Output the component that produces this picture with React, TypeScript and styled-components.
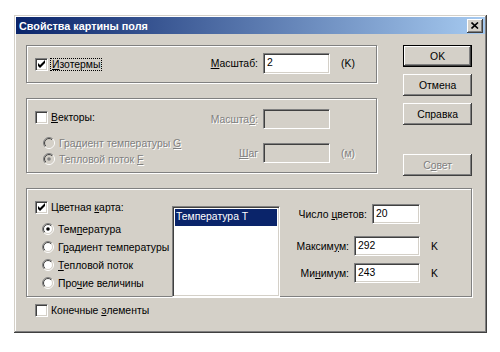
import { type FC, type ReactNode } from "react";
import styled, { createGlobalStyle } from "styled-components";

const GlobalStyle = createGlobalStyle`
  html, body {
    margin: 0;
    padding: 0;
    background: #fff;
  }
  body {
    font-family: "Liberation Sans", Arial, sans-serif;
    font-size: 10.4px;
    color: #000;
    white-space: nowrap;
  }
`;

const Window = styled.div`
  box-sizing: border-box;
  width: 473px;
  height: 318px;
  margin: 15px 0 0 14px;
  padding: 2px;
  background: #d4d0c8;
  box-shadow: inset -1px -1px #404040, inset 1px 1px #d4d0c8,
    inset -2px -2px #808080, inset 2px 2px #fff;
  display: flex;
  flex-direction: column;
`;

const TitleBar = styled.div`
  height: 17px;
  display: flex;
  align-items: center;
  justify-content: space-between;
  padding: 0 2px 0 3px;
  background: linear-gradient(to right, #0a246a, #a6caf0);
  color: #fff;
  font-weight: bold;
  font-size: 10.8px;
`;

const CloseBtn = styled.div`
  box-sizing: border-box;
  width: 16px;
  height: 14px;
  background: #d4d0c8;
  box-shadow: inset -1px -1px #404040, inset 1px 1px #fff,
    inset -2px -2px #808080, inset 2px 2px #d4d0c8;
  display: flex;
  align-items: center;
  justify-content: center;
`;

const Content = styled.div`
  padding: 11px 13px 0 10px;
  display: flex;
  flex-direction: column;
`;

const TopRow = styled.div`
  height: 128px;
  display: flex;
  align-items: flex-start;
  gap: 26px;
`;

const GroupsCol = styled.div`
  width: 352px;
  display: flex;
  flex-direction: column;
  gap: 15px;
`;

const Group = styled.div<{ $h: number; $w?: number }>`
  box-sizing: border-box;
  height: ${(p) => p.$h}px;
  width: ${(p) => (p.$w ? `${p.$w}px` : "auto")};
  border: 1px solid #808080;
  box-shadow: inset 1px 1px 0 #fff, 1px 1px 0 #fff;
  padding-left: 8px;
  display: flex;
`;

const LeftPart = styled.div<{ $w: number; $top?: number }>`
  width: ${(p) => p.$w}px;
  flex: none;
  padding-top: ${(p) => p.$top ?? 0}px;
  display: flex;
  flex-direction: column;
`;

const ButtonsCol = styled.div`
  width: 69px;
  display: flex;
  flex-direction: column;
  gap: 7px;
`;

const Button = styled.div<{ $default?: boolean; $disabled?: boolean; $gapTop?: number }>`
  box-sizing: border-box;
  height: 22px;
  margin-top: ${(p) => p.$gapTop ?? 0}px;
  display: flex;
  align-items: center;
  justify-content: center;
  background: #d4d0c8;
  color: ${(p) => (p.$disabled ? "#808080" : "#000")};
  text-shadow: ${(p) => (p.$disabled ? "1px 1px 0 #fff" : "none")};
  border: ${(p) => (p.$default ? "1px solid #000" : "none")};
  box-shadow: inset -1px -1px #404040, inset 1px 1px #fff,
    inset -2px -2px #808080, inset 2px 2px #d4d0c8;
`;

const CheckRow = styled.div<{ $disabled?: boolean }>`
  display: flex;
  align-items: center;
  height: 15px;
  gap: 3px;
  color: ${(p) => (p.$disabled ? "#808080" : "#000")};
`;

const Box = styled.span`
  box-sizing: border-box;
  width: 13px;
  height: 13px;
  flex: none;
  background: #fff;
  border: 1px solid;
  border-color: #808080 #fff #fff #808080;
  box-shadow: inset 1px 1px #404040, inset -1px -1px #d4d0c8;
  display: flex;
  align-items: center;
  justify-content: center;
`;

const Focus = styled.span`
  outline: 1px dotted #000;
  outline-offset: 0;
  padding: 0 1px;
  line-height: 13px;
`;

const Key = styled.span`
  text-decoration: underline;
`;

const Dim = styled.span<{ $on?: boolean }>`
  color: ${(p) => (p.$on ? "#808080" : "inherit")};
  text-shadow: ${(p) => (p.$on ? "1px 1px 0 #fff" : "none")};
`;

const RadioList = styled.div<{ $left: number; $row: number; $top: number }>`
  display: flex;
  flex-direction: column;
  padding-left: ${(p) => p.$left}px;
  margin-top: ${(p) => p.$top}px;
  & > div {
    height: ${(p) => p.$row}px;
  }
`;

const RadioRow = styled.div`
  display: flex;
  align-items: center;
  gap: 4px;
`;

const FieldCol = styled.div<{ $top: number; $gap: number }>`
  padding-top: ${(p) => p.$top}px;
  display: flex;
  flex-direction: column;
  gap: ${(p) => p.$gap}px;
`;

const FieldRow = styled.div<{ $end?: boolean }>`
  display: flex;
  align-items: center;
  justify-content: ${(p) => (p.$end ? "flex-end" : "flex-start")};
`;

const FieldLabel = styled.span<{ $w?: number; $disabled?: boolean }>`
  width: ${(p) => (p.$w ? `${p.$w}px` : "auto")};
  text-align: right;
  margin-right: 5px;
  color: ${(p) => (p.$disabled ? "#808080" : "#000")};
  text-shadow: ${(p) => (p.$disabled ? "1px 1px 0 #fff" : "none")};
`;

const Input = styled.div<{ $w: number; $h?: number; $disabled?: boolean }>`
  box-sizing: border-box;
  width: ${(p) => p.$w}px;
  height: ${(p) => p.$h ?? 20}px;
  background: ${(p) => (p.$disabled ? "#d4d0c8" : "#fff")};
  border: 1px solid;
  border-color: #808080 #fff #fff #808080;
  box-shadow: inset 1px 1px #404040, inset -1px -1px #d4d0c8;
  padding: 2px 3px 0;
  line-height: 14px;
`;

const Unit = styled.span<{ $w?: number; $disabled?: boolean }>`
  width: ${(p) => (p.$w ? `${p.$w}px` : "auto")};
  margin-left: 11px;
  color: ${(p) => (p.$disabled ? "#808080" : "#000")};
  text-shadow: ${(p) => (p.$disabled ? "1px 1px 0 #fff" : "none")};
`;

const ListBox = styled.div`
  box-sizing: border-box;
  width: 108px;
  flex: none;
  margin-top: 17px;
  margin-bottom: -1px;
  background: #fff;
  border: 1px solid;
  border-color: #808080 #fff #fff #808080;
  box-shadow: inset 1px 1px #404040, inset -1px -1px #d4d0c8;
  padding: 2px;
`;

const ListItem = styled.div<{ $selected?: boolean }>`
  height: 17px;
  line-height: 15px;
  padding-left: 1px;
  background: ${(p) => (p.$selected ? "#0a246a" : "transparent")};
  color: ${(p) => (p.$selected ? "#fff" : "#000")};
`;

const RightFields = styled.div`
  width: 176px;
  padding-top: 15px;
  display: flex;
  flex-direction: column;
`;

const BottomRow = styled.div`
  padding: 6px 0 0 9px;
`;

const CheckMark: FC = () => (
  <svg width="9" height="9" viewBox="0 0 9 9">
    <polygon points="1,3 1,6 3,8 8,3 8,0 3,5" fill="#000" />
  </svg>
);

const Check: FC<{ checked?: boolean; children: ReactNode; disabled?: boolean }> = ({
  checked,
  children,
  disabled
}) => (
  <CheckRow $disabled={disabled}>
    <Box>{checked && <CheckMark />}</Box>
    <span>{children}</span>
  </CheckRow>
);

const Radio: FC<{ on?: boolean; disabled?: boolean; children: ReactNode; id: string }> = ({
  on,
  disabled,
  children,
  id
}) => (
  <RadioRow>
    <svg width="12" height="12" viewBox="0 0 12 12">
      <defs>
        <linearGradient id={`o${id}`} x1="0" y1="0" x2="1" y2="1">
          <stop offset="0.5" stopColor="#808080" />
          <stop offset="0.5" stopColor="#fff" />
        </linearGradient>
        <linearGradient id={`i${id}`} x1="0" y1="0" x2="1" y2="1">
          <stop offset="0.5" stopColor="#404040" />
          <stop offset="0.5" stopColor="#d4d0c8" />
        </linearGradient>
      </defs>
      <circle cx="6" cy="6" r="5.5" fill="none" stroke={`url(#o${id})`} />
      <circle cx="6" cy="6" r="4.5" fill={disabled ? "#d4d0c8" : "#fff"} stroke={`url(#i${id})`} />
      {on && <circle cx="6" cy="6" r="1.8" fill={disabled ? "#808080" : "#000"} />}
    </svg>
    <Dim $on={disabled}>{children}</Dim>
  </RadioRow>
);

const App: FC = () => {
  return (
    <>
      <GlobalStyle />
      <Window>
        {/* заголовок */}
        <TitleBar>
          <span>Свойства картины поля</span>
          <CloseBtn>
            <svg width="8" height="7" viewBox="0 0 8 7">
              <path d="M0.5 0.5 L7 6.5 M7 0.5 L0.5 6.5" stroke="#000" strokeWidth="1.6" />
            </svg>
          </CloseBtn>
        </TitleBar>

        <Content>
          <TopRow>
            <GroupsCol>
              {/* изотермы */}
              <Group $h={38}>
                <LeftPart $w={168} $top={11}>
                  <Check checked>
                    <Focus>
                      <Key>И</Key>зотермы
                    </Focus>
                  </Check>
                </LeftPart>
                <FieldCol $top={7} $gap={0}>
                  <FieldRow>
                    <FieldLabel $w={55}>
                      <Key>М</Key>асштаб:
                    </FieldLabel>
                    <Input $w={67} $h={21}>2</Input>
                    <Unit>(K)</Unit>
                  </FieldRow>
                </FieldCol>
              </Group>

              {/* векторы */}
              <Group $h={75}>
                <LeftPart $w={168} $top={11}>
                  <Check>
                    <Key>В</Key>екторы:
                  </Check>
                  <RadioList $left={8} $row={16} $top={10}>
                    <Radio id="v1" disabled>
                      Градиент температуры <Key>G</Key>
                    </Radio>
                    <Radio id="v2" disabled on>
                      Тепловой поток <Key>F</Key>
                    </Radio>
                  </RadioList>
                </LeftPart>
                <FieldCol $top={10} $gap={14}>
                  <FieldRow>
                    <FieldLabel $w={55} $disabled>
                      Масшта<Key>б</Key>:
                    </FieldLabel>
                    <Input $w={67} $disabled />
                    <Unit $disabled> </Unit>
                  </FieldRow>
                  <FieldRow>
                    <FieldLabel $w={55} $disabled>
                      <Key>Ш</Key>аг
                    </FieldLabel>
                    <Input $w={67} $disabled />
                    <Unit $disabled>(м)</Unit>
                  </FieldRow>
                </FieldCol>
              </Group>
            </GroupsCol>

            <ButtonsCol>
              <Button $default>OK</Button>
              <Button>Отмена</Button>
              <Button>Справка</Button>
              <Button $disabled $gapTop={22}>
                С<Key>о</Key>вет
              </Button>
            </ButtonsCol>
          </TopRow>

          {/* цветная карта */}
          <Group $h={109} $w={446} style={{ marginTop: 15 }}>
            <LeftPart $w={137} $top={11}>
              <Check checked>
                Цветная <Key>к</Key>арта:
              </Check>
              <RadioList $left={7} $row={18} $top={5}>
                <Radio id="c1" on>
                  Тем<Key>п</Key>ература
                </Radio>
                <Radio id="c2">
                  Г<Key>р</Key>адиент температуры
                </Radio>
                <Radio id="c3">
                  <Key>Т</Key>епловой поток
                </Radio>
                <Radio id="c4">
                  Про<Key>ч</Key>ие величины
                </Radio>
              </RadioList>
            </LeftPart>
            <ListBox>
              <ListItem $selected>Температура T</ListItem>
            </ListBox>
            <RightFields>
              <FieldRow $end>
                <FieldLabel>
                  Число <Key>ц</Key>ветов:
                </FieldLabel>
                <Input $w={48}>20</Input>
                <Unit $w={25} />
              </FieldRow>
              <FieldRow $end style={{ marginTop: 12 }}>
                <FieldLabel>
                  Максим<Key>у</Key>м:
                </FieldLabel>
                <Input $w={66}>292</Input>
                <Unit $w={25}>K</Unit>
              </FieldRow>
              <FieldRow $end style={{ marginTop: 7 }}>
                <FieldLabel>
                  Ми<Key>н</Key>имум:
                </FieldLabel>
                <Input $w={66}>243</Input>
                <Unit $w={25}>K</Unit>
              </FieldRow>
            </RightFields>
          </Group>

          <BottomRow>
            <Check>
              Конечные <Key>э</Key>лементы
            </Check>
          </BottomRow>
        </Content>
      </Window>
    </>
  );
};

export default App;
